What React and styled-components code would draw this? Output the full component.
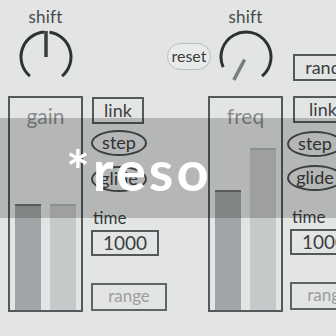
import styled, { createGlobalStyle } from "styled-components";

const Global = createGlobalStyle`
  html, body {
    margin: 0;
    padding: 0;
    background: #e3e4e4;
  }
  body {
    font-family: Lato, "Open Sans", sans-serif;
  }
`;

const ink = "#3b3e41";
const frame = "#56595c";

const polar = (deg, r) => {
  const a = (deg * Math.PI) / 180;
  return [28 + r * Math.sin(a), 28 - r * Math.cos(a)];
};

const arc = (from, to, r = 25) => {
  const [x1, y1] = polar(from, r);
  const [x2, y2] = polar(to, r);
  const large = to - from > 180 ? 1 : 0;
  return `M${x1} ${y1} A${r} ${r} 0 ${large} 1 ${x2} ${y2}`;
};

const Dial = ({ arcs, needle, needleColor }) => {
  const [x1, y1] = polar(needle, needle > -90 && needle < 90 ? 0 : 3);
  const [x2, y2] = polar(needle, 26);
  return (
    <svg width="56" height="56" viewBox="0 0 56 56">
      {arcs.map(([a, b]) => (
        <path key={a} d={arc(a, b)} fill="none" stroke="#2f3235" strokeWidth="3" />
      ))}
      <line x1={x1} y1={y1} x2={x2} y2={y2} stroke={needleColor} strokeWidth="3.5" />
    </svg>
  );
};

export default function App() {
  return (
    <>
      <Global />
      <Page>
        <Patch>
          <Channel $gap={8}>
            <MeterColumn>
              <KnobBlock>
                <KnobLabel>shift</KnobLabel>
                <Dial arcs={[[-140, -4], [8, 140]]} needle={0} needleColor="#3a3d40" />
              </KnobBlock>
              <MeterBox>
                <MeterLabel>gain</MeterLabel>
                <Bars>
                  <Bar $h={106} $tone="dark" />
                  <Bar $h={106} $tone="light" />
                </Bars>
              </MeterBox>
            </MeterColumn>
            <SideColumn $top={97} $w={76}>
              <BoxButton $w={52} $ml={1}>link</BoxButton>
              <Oval $mt={6}>step</Oval>
              <Oval $mt={10}>glide</Oval>
              <SideLabel>time</SideLabel>
              <NumberBox>1000</NumberBox>
              <RangeBox>range</RangeBox>
            </SideColumn>
          </Channel>

          <ResetSlot>
            <ResetPill>reset</ResetPill>
          </ResetSlot>

          <Channel $gap={7}>
            <MeterColumn>
              <KnobBlock>
                <KnobLabel>shift</KnobLabel>
                <Dial arcs={[[-114, 140]]} needle={-152} needleColor="#7b7e81" />
              </KnobBlock>
              <MeterBox>
                <MeterLabel>freq</MeterLabel>
                <Bars>
                  <Bar $h={120} $tone="dark" />
                  <Bar $h={162} $tone="light" />
                </Bars>
              </MeterBox>
            </MeterColumn>
            <SideColumn $top={54} $w={60}>
              <BoxButton $w={60} $ml={3}>rand</BoxButton>
              <BoxButton $w={60} $ml={3} $mt={15}>link</BoxButton>
              <Oval $mt={8} $ml={-3}>step</Oval>
              <Oval $mt={8} $ml={-3}>glide</Oval>
              <SideLabel>time</SideLabel>
              <NumberBox>1000</NumberBox>
              <RangeBox>range</RangeBox>
            </SideColumn>
          </Channel>
        </Patch>

        <Banner>
          <BannerText>*reso</BannerText>
        </Banner>
      </Page>
    </>
  );
}

const Page = styled.div`
  position: relative;
  width: 336px;
  height: 336px;
  overflow: hidden;
  background: #e3e4e4;
`;

const Patch = styled.div`
  display: flex;
  padding-left: 8px;
  width: max-content;
`;

const Channel = styled.div`
  display: flex;
  gap: ${(p) => p.$gap}px;
`;

const MeterColumn = styled.div`
  display: flex;
  flex-direction: column;
  width: 75px;
`;

const KnobBlock = styled.div`
  height: 96px;
  display: flex;
  flex-direction: column;
  align-items: center;
  padding-top: 8px;
  box-sizing: border-box;
  & > svg {
    margin-top: 3px;
  }
`;

const KnobLabel = styled.div`
  font-size: 17px;
  line-height: 18px;
  color: #45494c;
  letter-spacing: 0.2px;
`;

const MeterBox = styled.div`
  box-sizing: border-box;
  height: 216px;
  border: 2px solid ${frame};
  display: flex;
  flex-direction: column;
`;

const MeterLabel = styled.div`
  text-align: center;
  font-size: 21px;
  line-height: 24px;
  margin-top: 6px;
  color: #8a8d90;
`;

const Bars = styled.div`
  flex: 1;
  display: flex;
  align-items: flex-end;
  gap: 9px;
  padding: 0 5px;
`;

const Bar = styled.div`
  width: 26px;
  height: ${(p) => p.$h}px;
  box-sizing: border-box;
  background: ${(p) => (p.$tone === "dark" ? "#a2a5a7" : "#c6c9c9")};
  border-top: 2px solid ${(p) => (p.$tone === "dark" ? "#6e7174" : "#b1b4b5")};
`;

const SideColumn = styled.div`
  display: flex;
  flex-direction: column;
  align-items: flex-start;
  width: ${(p) => p.$w}px;
  padding-top: ${(p) => p.$top}px;
`;

const BoxButton = styled.div`
  box-sizing: border-box;
  width: ${(p) => p.$w}px;
  height: 27px;
  margin-left: ${(p) => p.$ml || 0}px;
  margin-top: ${(p) => p.$mt || 0}px;
  border: 2px solid ${frame};
  font-size: 18px;
  line-height: 23px;
  color: ${ink};
  text-align: center;
  flex-shrink: 0;
  white-space: nowrap;
`;

const Oval = styled.div`
  box-sizing: border-box;
  width: 56px;
  height: 26px;
  margin-top: ${(p) => p.$mt}px;
  margin-left: ${(p) => p.$ml || 0}px;
  border: 2px solid #4b4f52;
  border-radius: 50%;
  font-size: 18px;
  line-height: 21px;
  color: ${ink};
  text-align: center;
  flex-shrink: 0;
`;

const SideLabel = styled.div`
  margin-top: 16px;
  margin-left: 2px;
  font-size: 17px;
  line-height: 20px;
  color: ${ink};
`;

const NumberBox = styled.div`
  box-sizing: border-box;
  width: 68px;
  height: 26px;
  margin-top: 2px;
  border: 2px solid ${frame};
  font-size: 19px;
  line-height: 22px;
  color: ${ink};
  text-align: center;
  flex-shrink: 0;
`;

const RangeBox = styled.div`
  box-sizing: border-box;
  width: 76px;
  height: 28px;
  margin-top: 27px;
  border: 2px solid #606467;
  font-size: 17px;
  line-height: 22px;
  color: #9b9ea0;
  text-align: center;
  flex-shrink: 0;
`;

const ResetSlot = styled.div`
  width: 41px;
  padding-top: 43px;
`;

const ResetPill = styled.div`
  box-sizing: border-box;
  width: 44px;
  height: 27px;
  border: 1.5px solid #b9bcbd;
  border-radius: 14px;
  background: #e9eaea;
  font-size: 16px;
  line-height: 23px;
  color: ${ink};
  text-align: center;
`;

const Banner = styled.div`
  position: absolute;
  left: 0;
  right: 0;
  top: 118px;
  height: 100px;
  background: rgba(0, 0, 0, 0.2);
  display: flex;
  align-items: center;
  padding-left: 66px;
`;

const BannerText = styled.div`
  font-family: Lato, "Open Sans", sans-serif;
  font-weight: 700;
  font-size: 56px;
  line-height: 1;
  letter-spacing: 3px;
  color: #ffffff;
  margin-top: 4px;
`;
